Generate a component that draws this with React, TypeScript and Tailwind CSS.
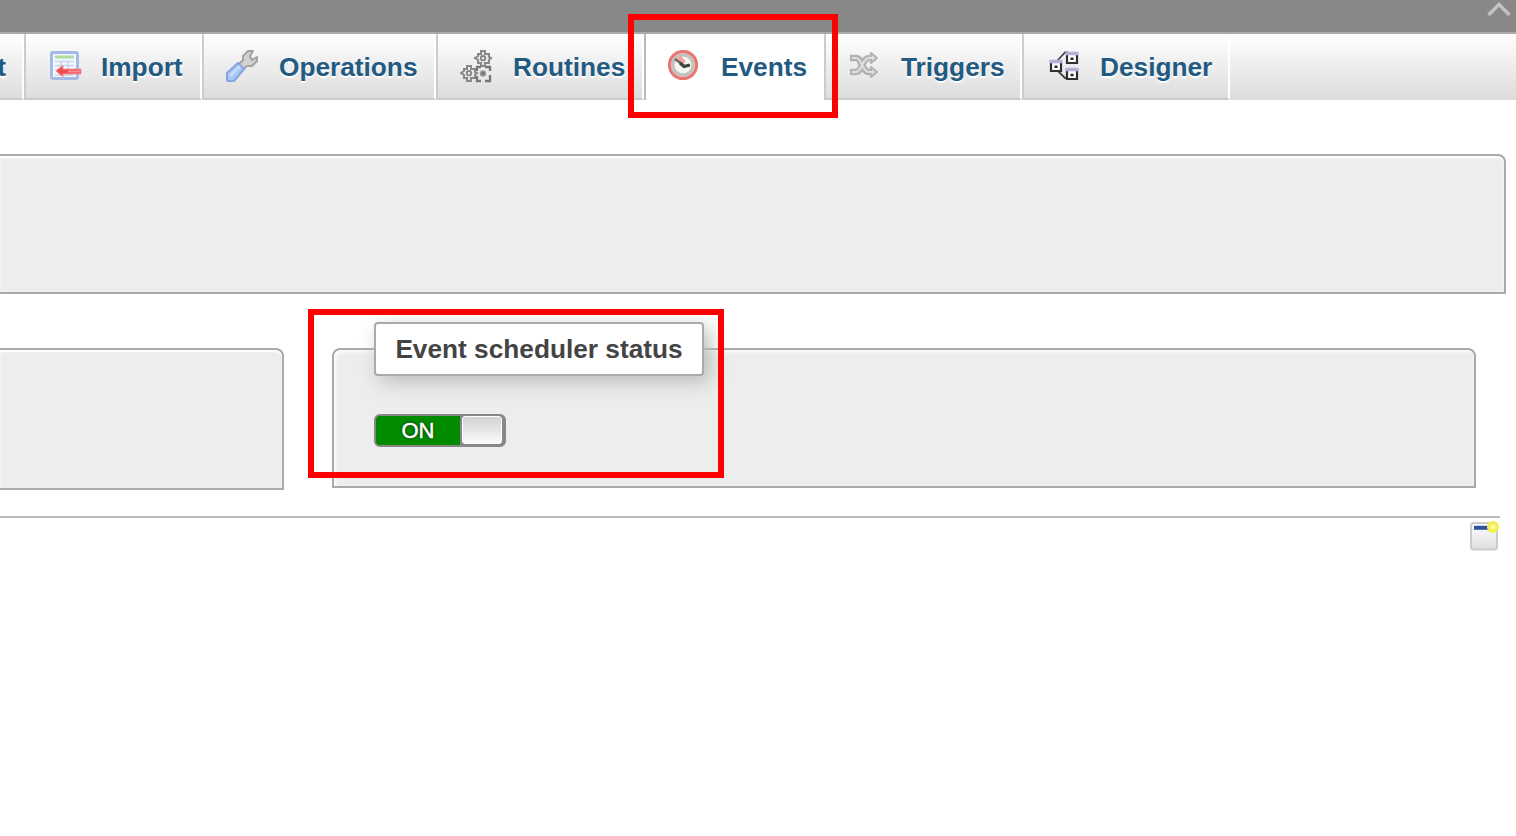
import type { ReactNode } from "react";

function ImportIcon() {
  return (
    <svg width="32" height="32" viewBox="0 0 32 32">
      <rect x="1.500" y="2.500" width="26" height="26" rx="1.5" fill="#f4f8fd" stroke="#a3bbe6" strokeWidth="3" />
      <path d="M5 7h19" stroke="#b3dba5" strokeWidth="3" />
      <path d="M5 11.5h19M5 15.5h19M5 20h19M5 25h19M11 12v14M18 12v14" stroke="#c6d6ef" strokeWidth="1.5" />
      <path d="M6 21l7-6v4h18v5H13v3z" fill="#ee4a50" stroke="#f59a9d" strokeWidth="1" />
      <path d="M18 21.5h12" stroke="#f79094" strokeWidth="2" />
    </svg>
  );
}

function WrenchIcon() {
  return (
    <svg width="32" height="32" viewBox="0 0 32 32">
      <path d="M13 14l4-4V6l5-5h5l-3 5 2 4 5-3v4l-5 5h-5l-4 4z" fill="#d2d2d2" stroke="#a3a3a3" strokeWidth="2" strokeLinejoin="round" />
      <path d="M1 23L12 13l6 6L8 31H2l-1-1z" fill="#a9c6f6" stroke="#86a4e0" strokeWidth="2" strokeLinejoin="round" />
      <path d="M4 26l10-10" stroke="#c5dafd" strokeWidth="3" />
    </svg>
  );
}

function Cog() {
  return (
    <>
      <path d="M6 1h4v3h4v3l2 1-2 2v3h-4v3H6v-3H3v-3L0 8l3-2V4h3z" fill="#e8e8e8" stroke="#888" strokeWidth="2" />
      <circle cx="8" cy="8.2" r="2.200" fill="#eee" stroke="#888" strokeWidth="1.9" />
    </>
  );
}

function RoutinesIcon() {
  return (
    <svg width="34" height="34" viewBox="0 0 34 34">
      <g transform="translate(15 0)"><Cog /></g>
      <g transform="translate(1 15)"><Cog /></g>
      <g transform="translate(15 15)">
        <path d="M2 6V2h4M10 2h5v4M15 10v6h-5M6 16H2v-5" fill="none" stroke="#777" strokeWidth="2.300" />
        <circle cx="8" cy="8.5" r="2.5" fill="#777" stroke="#999" strokeWidth="1.5" />
      </g>
    </svg>
  );
}

function ClockIcon() {
  return (
    <svg width="32" height="32" viewBox="0 0 32 32">
      <circle cx="15" cy="15" r="13.6" fill="#d5cfc8" stroke="#ec7473" strokeWidth="3" />
      <circle cx="15" cy="15" r="10" fill="#f5f5f2" stroke="#c4c1ba" strokeWidth="3" />
      <path d="M11 7l5 6" stroke="#f3a29b" strokeWidth="4.500" />
      <path d="M7 9l8 6" stroke="#666" strokeWidth="2.4" />
      <path d="M12 13l4 3.500 6-1.500" fill="none" stroke="#404040" strokeWidth="3" />
    </svg>
  );
}

function TriggersIcon() {
  return (
    <svg width="32" height="32" viewBox="0 0 32 32" fill="none" strokeLinejoin="round">
      <path d="M2 8h6c6 0 6 14 13 14h6" stroke="#b0b0b0" strokeWidth="6.500" />
      <path d="M2 22h6c6 0 6-14 13-14h6" stroke="#b5b5b5" strokeWidth="6.500" />
      <path d="M23 3l6 5-6 5zM23 17l6 5-6 5z" fill="#ddd" stroke="#b3b3b3" strokeWidth="2" />
      <path d="M4 8h4c6 0 6 14 13 14h5M4 22h4c6 0 6-14 13-14h5" stroke="#dfdfdf" strokeWidth="2.2" />
    </svg>
  );
}

function DesignerIcon() {
  return (
    <svg width="32" height="32" viewBox="0 0 32 32">
      <path d="M9 11l8-8.500h3M9 20l8 8h3" fill="none" stroke="#444" strokeWidth="1.8" />
      <g fill="#fff" stroke="#303030" strokeWidth="2.2">
        <path d="M3 11v10h10V11" />
        <path d="M19 3v10h10V3" />
        <path d="M19 19v10h10V19" />
      </g>
      <path d="M1.500 11.500h13M17.500 3.500h13M17.500 19.500h13" stroke="#b9abdc" strokeWidth="3.500" />
      <path d="M6.500 16.800h3M22.500 8.800h3M22.500 25h3" stroke="#252525" strokeWidth="2.600" />
    </svg>
  );
}

function NewEventIcon() {
  return (
    <svg width="32" height="32" viewBox="0 0 32 32">
      <defs>
        <linearGradient id="page" x1="0" y1="0" x2="0" y2="1">
          <stop stopColor="#fff" />
          <stop offset="1" stopColor="#ddd" />
        </linearGradient>
      </defs>
      <rect x="3" y="3" width="26" height="26.500" rx="2.500" fill="url(#page)" stroke="#cbcbcb" strokeWidth="2" />
      <path d="M6 7.800h16" stroke="#2c539b" strokeWidth="4" />
      <circle cx="25" cy="7" r="6" fill="#f3ee55" />
      <circle cx="25" cy="7" r="2.500" fill="#fff89a" />
    </svg>
  );
}

const tabText = "text-[26.24px] leading-8 font-bold text-[#235a81] [text-shadow:0_2px_0_#fff]";

const edges = {
  normal: "border-x-2 border-b-2 border-b-[#ccc] border-l-[#ccc] border-r-white",
  active: "border-x-2 border-l-[#bbb] border-r-[#ccc] bg-white",
  afterActive: "border-r-2 border-b-2 border-b-[#ccc] border-r-white",
};

function Tab({ icon, label, className, edge = "normal" }: {
  icon: ReactNode; label: string; className: string; edge?: keyof typeof edges;
}) {
  return (
    <div className={`flex h-[66px] shrink-0 items-start pt-4 whitespace-nowrap ${edges[edge]} ${className}`}>
      <span className="w-8 shrink-0">{icon}</span>
      <span className={`pt-px ${tabText}`}>{label}</span>
    </div>
  );
}

export default function App() {
  return (
    <div className="relative h-[836px] w-[1516px] overflow-hidden bg-white font-['Liberation_Sans',Arial,sans-serif]">
      <header className="flex h-[34px] justify-end border-b-2 border-[#aaa] bg-[#888]">
        <svg width="30" height="22" viewBox="0 0 30 22">
          <path d="M2.500 15L13 4.500 23.500 15" fill="none" stroke="#c3c3c3" strokeWidth="3.500" />
        </svg>
      </header>

      <nav className="flex h-[66px] bg-linear-to-b from-white to-[#dcdcdc]">
        <div className="flex w-6 shrink-0 justify-end border-r-2 border-b-2 border-r-white border-b-[#ccc] pt-[17px] pr-4">
          <span className={tabText}>t</span>
        </div>
        <Tab icon={<ImportIcon />} label="Import" className="w-[178px] gap-[19px] pl-6" />
        <Tab icon={<WrenchIcon />} label="Operations" className="w-[234px] gap-[21px] pl-[22px]" />
        <Tab icon={<RoutinesIcon />} label="Routines" className="w-[208px] gap-[21px] pl-[22px]" />
        <Tab icon={<ClockIcon />} label="Events" className="w-[182px] gap-[21px] pl-[22px]" edge="active" />
        <Tab icon={<TriggersIcon />} label="Triggers" className="w-[196px] gap-[21px] pl-[22px]" edge="afterActive" />
        <Tab icon={<DesignerIcon />} label="Designer" className="w-[208px] gap-[20px] pl-6" />
      </nav>

      <main>
        <section className="mt-[54px] h-[140px] w-[1506px] rounded-tr-[8px] border-2 border-l-0 border-[#aaa] bg-[#ededed] shadow-[inset_0_2px_2px_#fff]" />
        <div className="mt-[54px] flex h-[142px] items-start gap-12">
          <section className="h-[142px] w-[284px] rounded-tr-[8px] border-2 border-l-0 border-[#aaa] bg-[#ededed] shadow-[inset_0_2px_2px_#fff]" />
          <section className="h-[140px] w-[1144px] rounded-t-[8px] border-2 border-[#aaa] bg-[#ededed] pl-10 shadow-[inset_2px_2px_4px_#fff]">
            <h2 className="-mt-7 flex h-[54px] w-[330px] items-center justify-center rounded-[4px] border-2 border-[#aaa] bg-white pt-px text-[26.24px] font-bold text-[#444] shadow-[6px_6px_20px_#bbb]">
              Event scheduler status
            </h2>
            <div className="mt-[38px] flex h-[33px] w-[132px] overflow-hidden rounded-[6px] border-2 border-[#888] bg-[#888]">
              <span className="flex h-[29px] w-[84px] items-center justify-center bg-[#008b00] text-[22px] text-white [-webkit-text-stroke:0.5px_#fff] [text-shadow:0_0_3px_#000]">ON</span>
              <span className="ml-[2px] h-[28px] w-10 rounded-[3px] border border-white bg-linear-to-b from-[#d2d2d2] to-[#fafafa]" />
            </div>
          </section>
        </div>
        <div className="mt-[26px] h-0.5 w-[1500px] bg-[#bbb]" />
        <div className="flex w-[1500px] justify-end pt-[2px]"><NewEventIcon /></div>
      </main>

      <div className="absolute top-[14px] left-[628px] h-[104px] w-[210px] border-6 border-[#f00]" />
      <div className="absolute top-[309px] left-[308px] h-[169px] w-[416px] border-6 border-[#f00]" />
    </div>
  );
}
